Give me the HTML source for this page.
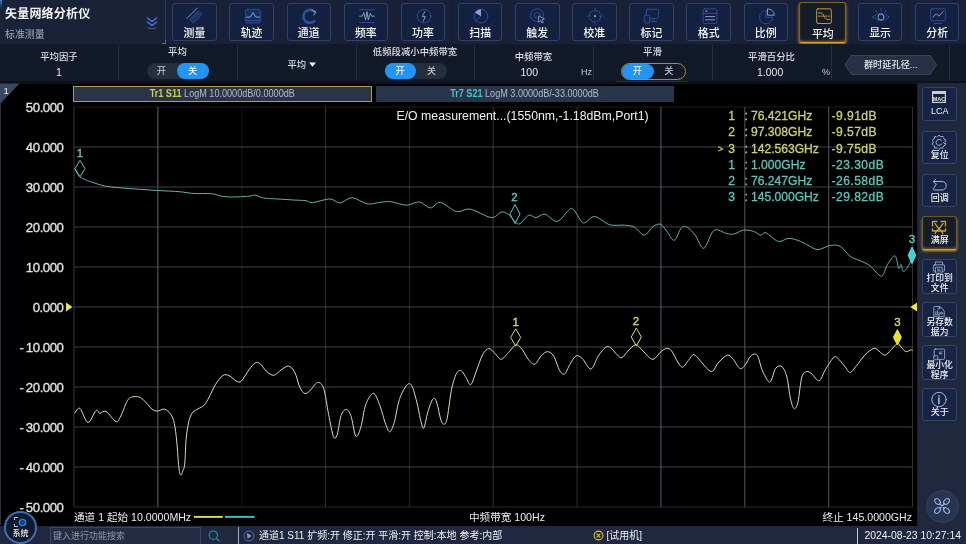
<!DOCTYPE html>
<html lang="zh"><head><meta charset="utf-8"><title>矢量网络分析仪</title>
<style>
*{box-sizing:border-box;margin:0;padding:0}
html,body{width:966px;height:544px;overflow:hidden;background:#000}
body{font-family:"Liberation Sans","Noto Sans CJK SC",sans-serif;color:#e8e8e8;position:relative;font-size:11px}
#app{position:absolute;left:0;top:0;width:966px;height:544px;overflow:hidden;background:#000;will-change:transform}
.abs{position:absolute}
/* top bar */
#top{position:absolute;left:0;top:0;width:966px;height:44px;background:#19213a}
#title{position:absolute;left:0;top:0;width:166px;height:44px;background:#1a2238;border-right:1px solid #2b3652;border-bottom:1px solid #1a2236}
#title .t1{position:absolute;left:5px;top:3.5px;font-size:12px;font-weight:700;color:#f2f2f2;letter-spacing:.2px;white-space:nowrap}
#title .t2{position:absolute;left:5px;top:26.5px;font-size:9.9px;color:#a4abba;white-space:nowrap}
#title .corner{position:absolute;right:-1px;bottom:-1px;width:4px;height:4px;border-right:1.5px solid #2f6fd0;border-bottom:1.5px solid #2f6fd0}
#title .tl{position:absolute;left:0;top:0;width:1.5px;height:8px;background:linear-gradient(#2f7fe8,#1a2238)}
.tb{position:absolute;top:3px;width:44.5px;height:37.5px;border:1px solid #35425f;border-radius:3px;background:#13203f;text-align:center}
.tb svg{position:absolute;left:11.3px;top:2.6px;fill:none;stroke:#2a4f9e;stroke-width:1.05;stroke-linecap:round;stroke-linejoin:round}
.tb span{position:absolute;left:0;right:0;top:21.6px;font-size:10.9px;font-weight:500;color:#f4f4f4;line-height:15px;white-space:nowrap}
.tb.act{top:1.5px;margin-left:-1.3px;width:47px;height:41px;border-color:#7d6426;border-bottom-color:#d9a52a;background:#151b29;box-shadow:0 1.5px 3px -0.5px #d9a321, inset 0 -2px 3px -1px rgba(217,163,33,.55)}
.tb.act svg{stroke:#c9a13a;left:12.3px;top:4.2px}
.tb.act span{top:24px}
.tsep{position:absolute;top:0;width:1px;height:44px;background:#161d34}
/* second row */
#row2{position:absolute;left:0;top:44px;width:966px;height:40px;background:#121929;border-bottom:3px solid #0c111c}
.cell{position:absolute;top:0;height:39px}
.vsep{position:absolute;top:1px;width:1.3px;height:35px;background:#272e40}
.lab{position:absolute;left:0;right:0;text-align:center;font-size:9.4px;color:#dcdfe5;white-space:nowrap;line-height:12px;font-weight:500}
.val{position:absolute;margin-top:-1px;font-size:10.5px;color:#e8e8e8;line-height:12px;white-space:nowrap}
.tog{position:absolute;height:16px;border-radius:8px;background:#262d3e;font-size:9.3px;color:#cfd3da;line-height:16px}
.tog i{position:absolute;top:0;height:16px;font-style:normal;text-align:center;border-radius:8px}
.tog i.on{background:#2294f4;color:#fff}
/* chart */
#chart{position:absolute;left:0;top:83.5px;width:917px;height:441px;background:#000;border-left:1.5px solid #283247}
.yl{position:absolute;left:0;width:63.5px;text-align:right;font-size:13.2px;color:#e4e4e4;line-height:16px;height:16px;letter-spacing:-.45px;padding-right:0;-webkit-text-stroke:.3px #e4e4e4}
.yl b{font-weight:400;letter-spacing:2px}
.tab{position:absolute;top:85.7px;height:16px;font-size:9.1px;line-height:14px;text-align:center;color:#b4bac8;white-space:nowrap}
.tab span{display:inline-block;transform:scaleY(1.16);transform-origin:50% 55%}
.mk{font-size:11.5px;text-anchor:middle;font-family:"Liberation Sans",sans-serif;stroke-width:.35px}
.mr{position:absolute;left:700px;width:215px;height:16px;font-size:12.1px;line-height:16px;white-space:nowrap;-webkit-text-stroke:.3px}
.mr.y{color:#cfd26e}.mr.c{color:#5cc6bf}
.mr span{position:absolute;top:0}
.mr .ma{left:18px;font-size:9px}
.mr .mn{left:20px;width:15px;text-align:right}
.mr .mc{left:44.5px}
.mr .mf{left:51px}
.mr .mv{left:131.5px;letter-spacing:.45px}
.bt{position:absolute;top:510px;font-size:10.6px;line-height:15px;color:#ececec;white-space:nowrap}
/* sidebar */
#side{position:absolute;left:917px;top:83px;width:49px;height:461px;background:#20283e;border-left:1.5px solid #1a2133}
.sb{position:absolute;left:922.3px;width:34.7px;border:1px solid #36435f;border-radius:3px;background:#172446;text-align:center}
.sb svg{position:absolute;left:6px;top:1px;fill:none;stroke:#aab6d6;stroke-width:1;stroke-linecap:round;stroke-linejoin:round}
.sb span{position:absolute;left:-4px;right:-4px;top:18.3px;font-size:9px;line-height:11px;color:#f0f0f0;font-weight:500;white-space:nowrap}
.sb.two svg{top:0.5px;transform:scale(.8);transform-origin:50% 0}
.sb.two span{top:13.5px;line-height:10px;font-size:8.8px}
.sb.act{border-color:#6d5928;border-bottom-color:#cfa02c;background:#171c2a;box-shadow:0 1.5px 2.5px -0.5px #d9a321, inset 0 -2px 3px -1px rgba(217,163,33,.5)}
.sb.act svg{stroke:#c9a035;stroke-width:1.3}
/* status */
#status{position:absolute;left:0;top:525.5px;width:966px;height:20px;background:#202741}
#sys{position:absolute;left:4px;top:511px;width:33px;height:32.5px;border-radius:50%;background:#121a2e;border:2px solid #3a6fb4;text-align:center}
#sys span{position:absolute;left:0;right:0;top:15.5px;font-size:8px;line-height:10px;color:#f0f0f0;font-weight:500}
#search{position:absolute;left:49.5px;top:527px;width:151px;height:18px;border:1px solid #3a4868;background:#232c44;font-size:9px;line-height:16px;color:#8e97aa;padding-left:2.5px;white-space:nowrap}
.st{position:absolute;top:528px;font-size:10px;line-height:15px;color:#f0f0f0;white-space:nowrap}
</style></head><body><div id="app">

<div id="top">
  <div id="title"><div class="tl"></div><div class="t1">矢量网络分析仪</div><div class="t2">标准测量</div>
    <svg class="abs" style="left:145px;top:16px" width="14" height="14" viewBox="0 0 14 14" fill="none" stroke="#3b7be0" stroke-width="1.4" stroke-linecap="round" stroke-linejoin="round"><path d="M2.5 2 L7 5.5 L11.5 2"/><path d="M2.5 6 L7 9.5 L11.5 6"/><path d="M3.5 12 Q7 13.5 10.5 12" stroke="#59616f" stroke-width="1"/></svg>
    <div class="corner"></div>
  </div>
  <div class="tb" style="left:172.2px"><svg viewBox="0 0 24 20" width="22" height="18.3"><g transform="translate(12 10) scale(.9) translate(-12 -10) rotate(-45 12 10)"><rect x="4.5" y="8.5" width="15" height="6" rx="1" fill="rgba(44,88,176,.3)"/><line x1="3" y1="5" x2="21" y2="5" stroke="#8a9ecb"/><line x1="8" y1="8.5" x2="8" y2="11"/><line x1="12" y1="8.5" x2="12" y2="11"/><line x1="16" y1="8.5" x2="16" y2="11"/></g></svg><span>测量</span></div><div class="tb" style="left:229.3px"><svg viewBox="0 0 24 20" width="22" height="18.3"><rect x="4" y="2.5" width="16" height="15" rx="1.5" fill="rgba(44,88,176,.25)"/><path d="M5 11 H9 L12 6 L15 11 H19" stroke="#8a9ecb"/><line x1="5" y1="15" x2="19" y2="15"/></svg><span>轨迹</span></div><div class="tsep" style="left:222.8px"></div><div class="tb" style="left:286.5px"><svg viewBox="0 0 24 20" width="22" height="18.3"><path d="M16.5 15.5 A7 7 0 1 1 17.5 6" stroke-width="3" stroke-dasharray="2.2 0.8"/><path d="M14 3.5 L18.5 5.5 L16 9" stroke="#8a9ecb" fill="none"/></svg><span>通道</span></div><div class="tsep" style="left:280.0px"></div><div class="tb" style="left:343.6px"><svg viewBox="0 0 24 20" width="22" height="18.3"><line x1="4" y1="3" x2="20" y2="3"/><line x1="4" y1="17" x2="20" y2="17"/><path d="M4 10 H7 L8.5 6 L10.5 14 L12 5 L13.5 14 L15.5 7 L17 10 H20" stroke="#8a9ecb"/></svg><span>频率</span></div><div class="tsep" style="left:337.1px"></div><div class="tb" style="left:400.7px"><svg viewBox="0 0 24 20" width="22" height="18.3"><circle cx="12" cy="10" r="7.5"/><path d="M13 5 L10 10.5 H13.5 L11 15.5" stroke="#8a9ecb"/></svg><span>功率</span></div><div class="tsep" style="left:394.2px"></div><div class="tb" style="left:457.9px"><svg viewBox="0 0 24 20" width="22" height="18.3"><circle cx="12" cy="10" r="7.5"/><path d="M12 10 L5.5 6.3 A7.5 7.5 0 0 1 12 2.5 Z" fill="#8a9ecb" stroke="none"/><path d="M12 10 L6 15" /></svg><span>扫描</span></div><div class="tsep" style="left:451.4px"></div><div class="tb" style="left:515.0px"><svg viewBox="0 0 24 20" width="22" height="18.3"><circle cx="11" cy="9" r="7"/><circle cx="11" cy="9" r="3.2"/><path d="M13 10 L19 13 L16.3 14 L17.8 17 L16.5 17.6 L15 14.8 L13 16.5 Z" fill="#1a2440" stroke="#8a9ecb" stroke-width="0.9"/></svg><span>触发</span></div><div class="tsep" style="left:508.5px"></div><div class="tb" style="left:572.1px"><svg viewBox="0 0 24 20" width="22" height="18.3"><circle cx="12" cy="10" r="6.5" stroke-dasharray="7.2 3"/><line x1="12" y1="1" x2="12" y2="5"/><line x1="12" y1="15" x2="12" y2="19"/><line x1="3" y1="10" x2="7" y2="10"/><line x1="17" y1="10" x2="21" y2="10"/><circle cx="12" cy="10" r="1.2" fill="#8a9ecb" stroke="none"/></svg><span>校准</span></div><div class="tsep" style="left:565.6px"></div><div class="tb" style="left:629.2px"><svg viewBox="0 0 24 20" width="22" height="18.3"><rect x="6" y="2.5" width="13" height="10" rx="1"/><rect x="3.5" y="9" width="6" height="8.5" rx="1" fill="#1a2440"/><line x1="11" y1="16" x2="17" y2="16"/><line x1="14" y1="12.5" x2="14" y2="16"/></svg><span>标记</span></div><div class="tsep" style="left:622.7px"></div><div class="tb" style="left:686.4px"><svg viewBox="0 0 24 20" width="22" height="18.3"><rect x="4.5" y="2" width="15" height="16" rx="1.5"/><line x1="4.5" y1="7" x2="19.5" y2="7"/><line x1="7" y1="4.5" x2="9" y2="4.5" stroke="#8a9ecb"/><line x1="7" y1="10.5" x2="17" y2="10.5" stroke="#8a9ecb"/><line x1="7" y1="14" x2="17" y2="14" stroke="#8a9ecb"/></svg><span>格式</span></div><div class="tsep" style="left:679.9px"></div><div class="tb" style="left:743.5px"><svg viewBox="0 0 24 20" width="22" height="18.3"><path d="M11 4 A7.2 7.2 0 1 0 18.2 11.2 H11 Z"/><path d="M13 2 A7 7 0 0 1 20 9 H13 Z" stroke="#8a9ecb"/></svg><span>比例</span></div><div class="tsep" style="left:737.0px"></div><div class="tb act" style="left:800.6px"><svg viewBox="0 0 24 20" width="22" height="18.3"><rect x="4" y="2" width="16" height="16" rx="1.5"/><path d="M6 6.5 H9 C12 6.5 12 13.5 15 13.5 H18" /><line x1="6" y1="10" x2="18" y2="10" stroke-dasharray="2 1.5"/></svg><span>平均</span></div><div class="tsep" style="left:794.1px"></div><div class="tb" style="left:857.8px"><svg viewBox="0 0 24 20" width="22" height="18.3"><path d="M3 11 Q12 2.5 21 11 Q12 19 3 11 Z"/><circle cx="12" cy="11" r="3.3" stroke="#8a9ecb"/><line x1="6" y1="3.5" x2="7.5" y2="5.5"/><line x1="12" y1="1.5" x2="12" y2="4"/><line x1="18" y1="3.5" x2="16.5" y2="5.5"/></svg><span>显示</span></div><div class="tsep" style="left:851.3px"></div><div class="tb" style="left:914.9px"><svg viewBox="0 0 24 20" width="22" height="18.3"><rect x="4" y="2" width="16" height="13" rx="1.5"/><path d="M6.5 11 L10 7.5 L13 10 L17.5 5" stroke="#8a9ecb"/><line x1="8" y1="18" x2="16" y2="18"/></svg><span>分析</span></div><div class="tsep" style="left:908.4px"></div>
</div>

<div id="row2">
  <div class="vsep" style="left:117.5px"></div><div class="vsep" style="left:236.5px"></div><div class="vsep" style="left:355.5px"></div><div class="vsep" style="left:474px"></div><div class="vsep" style="left:593px"></div><div class="vsep" style="left:712px"></div><div class="vsep" style="left:830.5px"></div><div class="vsep" style="left:949px"></div>
  <div class="cell" style="left:0;width:118px"><div class="lab" style="top:7px">平均因子</div><div class="val" style="left:56px;top:22.5px">1</div></div>
  <div class="cell" style="left:118px;width:119px"><div class="lab" style="top:1.5px">平均</div>
     <div class="tog" style="left:28.5px;top:19px;width:62px"><i style="left:0;width:30px">开</i><i class="on" style="left:30.5px;width:31.5px">关</i></div></div>
  <div class="cell" style="left:237px;width:119px"><div class="lab" style="top:14.5px;left:10px;font-size:9.3px">平均 <svg width="7" height="5" viewBox="0 0 7 5" style="vertical-align:1px"><path d="M0 0.5 H7 L3.5 4.8 Z" fill="#f0f0f0"/></svg></div></div>
  <div class="cell" style="left:356px;width:118px"><div class="lab" style="top:1.5px">低频段减小中频带宽</div>
     <div class="tog" style="left:28.5px;top:19px;width:62px"><i class="on" style="left:0;width:31.5px">开</i><i style="left:32px;width:30px">关</i></div></div>
  <div class="cell" style="left:474px;width:119px"><div class="lab" style="top:7px">中频带宽</div><div class="val" style="left:46.5px;top:22.5px">100</div><div class="val" style="left:107px;top:23px;font-size:9px;color:#c9ccd4">Hz</div></div>
  <div class="cell" style="left:593px;width:119px"><div class="lab" style="top:1.5px">平滑</div>
     <div class="tog" style="left:27.5px;top:19px;width:65px;height:17px;border:1px solid #b48a30;border-radius:9px;background:#131927"><i class="on" style="left:0;top:0;width:32px;height:15px;line-height:15px">开</i><i style="left:32px;width:31px;height:15px;line-height:15px">关</i></div></div>
  <div class="abs" style="left:616px;top:37px;width:72px;height:1px;background:#3b2c1a"></div>
  <div class="cell" style="left:712px;width:119px"><div class="lab" style="top:7px">平滑百分比</div><div class="val" style="left:45px;top:22.5px">1.000</div><div class="val" style="left:110px;top:23px;font-size:9px;color:#c9ccd4">%</div></div>
  <div class="abs" style="left:844.5px;top:10.5px;width:92.5px;height:20.5px;background:#3a435a;clip-path:polygon(7px 0,calc(100% - 7px) 0,100% 50%,calc(100% - 7px) 100%,7px 100%,0 50%)"><div class="abs" style="left:1px;top:1px;right:1px;bottom:1px;background:#293046;clip-path:polygon(6.6px 0,calc(100% - 6.6px) 0,100% 50%,calc(100% - 6.6px) 100%,6.6px 100%,0 50%);text-align:center;font-size:9.2px;line-height:18px;color:#e6e8ec;font-weight:500;white-space:nowrap">群时延孔径...</div></div>
</div>

<div id="chart"></div>
<svg class="abs" style="left:0;top:0" width="966" height="544" viewBox="0 0 966 544">
  <polygon points="0,83.5 19.5,83.5 1,103 0,103" fill="#3a4560"/>
  <text x="3.5" y="94" font-size="9.5" fill="#f0f0f0" font-family="Liberation Sans, sans-serif">1</text>
  <g stroke="#5c5c64" stroke-width="1.1"><line x1="74.00" y1="107" x2="74.00" y2="507" stroke-opacity="0.55"/><line x1="157.85" y1="107" x2="157.85" y2="507" stroke-opacity="0.95"/><line x1="241.70" y1="107" x2="241.70" y2="507" stroke-opacity="0.20"/><line x1="325.55" y1="107" x2="325.55" y2="507" stroke-opacity="0.50"/><line x1="409.40" y1="107" x2="409.40" y2="507" stroke-opacity="0.38"/><line x1="493.25" y1="107" x2="493.25" y2="507" stroke-opacity="0.50"/><line x1="577.10" y1="107" x2="577.10" y2="507" stroke-opacity="0.50"/><line x1="660.95" y1="107" x2="660.95" y2="507" stroke-opacity="0.95"/><line x1="744.80" y1="107" x2="744.80" y2="507" stroke-opacity="0.85"/><line x1="828.65" y1="107" x2="828.65" y2="507" stroke-opacity="0.85"/><line x1="912.50" y1="107" x2="912.50" y2="507" stroke-opacity="0.50"/><line x1="74.0" y1="107" x2="912.5" y2="107" stroke-opacity="0.28"/><line x1="74.0" y1="147" x2="912.5" y2="147" stroke-opacity="0.70"/><line x1="74.0" y1="187" x2="912.5" y2="187" stroke-opacity="0.70"/><line x1="74.0" y1="227" x2="912.5" y2="227" stroke-opacity="0.70"/><line x1="74.0" y1="267" x2="912.5" y2="267" stroke-opacity="0.70"/><line x1="74.0" y1="307" x2="912.5" y2="307" stroke-opacity="0.70"/><line x1="74.0" y1="347" x2="912.5" y2="347" stroke-opacity="0.70"/><line x1="74.0" y1="387" x2="912.5" y2="387" stroke-opacity="0.70"/><line x1="74.0" y1="427" x2="912.5" y2="427" stroke-opacity="0.70"/><line x1="74.0" y1="467" x2="912.5" y2="467" stroke-opacity="0.70"/><line x1="74.0" y1="507" x2="912.5" y2="507" stroke-opacity="0.45"/></g>
  <path d="M74.5 168.6C74.9 169.3 76.1 171.7 77.0 173.0C77.9 174.3 78.6 175.7 80.0 176.8C81.4 177.9 84.0 179.1 86.0 180.0C88.0 180.9 89.4 181.3 92.4 182.3C95.4 183.3 100.4 185.1 104.8 186.0C109.2 186.9 114.1 187.3 119.7 187.8C125.3 188.3 133.6 188.9 139.6 189.3C145.6 189.7 151.1 190.1 157.5 190.5C163.9 190.9 173.4 191.2 179.3 191.7C185.2 192.2 189.0 193.2 194.2 193.5C199.4 193.8 207.2 193.3 211.6 193.7C216.0 194.1 218.4 195.7 221.6 196.2C224.8 196.7 227.1 197.0 231.5 197.0C235.9 197.0 245.1 196.5 248.9 196.2C252.7 195.9 252.7 194.9 255.1 195.2C257.5 195.5 260.4 197.4 263.8 198.0C267.2 198.6 271.4 198.6 276.2 198.9C281.0 199.2 288.8 199.7 293.6 200.0C298.4 200.3 303.0 200.3 306.0 200.7C309.0 201.1 308.6 203.0 312.4 202.7C316.2 202.4 325.4 198.9 329.8 198.9C334.2 198.9 336.2 203.1 339.8 202.9C343.4 202.7 347.8 197.5 352.2 197.7C356.6 197.9 362.7 203.1 367.1 203.9C371.5 204.7 375.7 202.8 379.5 202.4C383.3 202.0 386.3 201.3 390.7 201.7C395.1 202.1 402.2 205.2 406.8 205.2C411.4 205.2 415.5 201.5 419.3 201.9C423.1 202.3 427.0 207.8 430.4 207.9C433.8 208.0 436.2 201.8 440.4 202.4C444.6 203.0 451.7 210.5 456.5 211.6C461.3 212.7 464.6 208.1 470.2 209.1C475.8 210.1 486.3 217.1 491.3 217.6C496.3 218.1 498.4 212.6 501.2 212.1C504.0 211.6 505.9 212.7 508.7 214.6C511.5 216.5 515.4 223.9 518.6 224.0C521.8 224.1 525.8 216.3 528.6 215.3C531.4 214.3 533.4 217.8 536.0 217.6C538.6 217.4 541.5 213.6 544.9 214.2C548.3 214.8 553.3 222.2 557.3 221.4C561.3 220.6 567.0 210.7 569.8 209.0C572.6 207.3 572.5 208.8 574.7 211.0C576.9 213.2 580.2 222.0 583.4 222.9C586.6 223.8 590.4 216.2 594.6 216.5C598.8 216.8 604.7 223.3 609.5 224.7C614.3 226.1 620.4 224.8 624.4 225.2C628.4 225.6 631.1 225.5 634.3 227.1C637.5 228.7 641.3 235.2 644.3 235.1C647.3 235.0 650.4 228.3 653.0 226.6C655.6 224.9 658.2 223.5 660.4 224.2C662.6 224.9 664.4 228.3 666.6 230.9C668.8 233.5 671.7 240.8 674.1 240.3C676.5 239.8 679.4 229.6 681.6 227.6C683.8 225.6 685.6 226.4 687.8 227.6C690.0 228.8 692.6 231.8 695.2 235.1C697.8 238.4 700.9 249.1 703.9 248.3C706.9 247.5 710.3 232.8 713.9 230.4C717.5 228.0 723.1 232.8 726.3 233.4C729.5 234.0 730.9 234.6 733.7 234.1C736.5 233.6 740.5 230.5 743.7 230.1C746.9 229.7 750.9 230.6 753.6 231.4C756.3 232.2 758.8 235.0 760.8 235.2C762.8 235.4 763.0 231.7 765.8 232.7C768.6 233.7 774.6 240.5 778.2 241.4C781.8 242.3 784.9 238.6 788.1 238.4C791.3 238.2 794.8 239.3 798.0 240.4C801.2 241.5 804.8 243.7 808.0 245.2C811.2 246.7 814.3 249.6 817.9 249.6C821.5 249.6 826.7 245.9 830.3 245.4C833.9 244.9 837.1 244.7 840.3 246.4C843.5 248.1 847.0 254.0 850.2 256.3C853.4 258.6 857.0 259.3 860.2 260.8C863.4 262.3 866.7 263.3 870.1 265.8C873.5 268.3 878.5 276.4 881.3 276.2C884.1 276.0 885.3 267.8 887.5 264.5C889.7 261.2 893.2 255.2 895.0 255.8C896.8 256.4 897.7 266.9 898.7 268.3C899.7 269.7 900.3 264.0 901.1 264.5C901.9 265.0 902.2 271.7 903.6 271.5C905.0 271.3 908.4 266.2 909.8 263.3C911.2 260.4 911.9 255.0 912.3 253.4" fill="none" stroke="#68b0ab" stroke-width="1" stroke-linejoin="round"/>
  <path d="M74.5 413.4C75.4 412.6 77.9 406.9 80.0 408.4C82.1 409.9 85.3 422.2 87.9 422.5C90.5 422.8 94.2 411.9 96.1 410.4C98.0 408.9 98.2 413.2 99.8 413.4C101.4 413.6 103.4 410.1 106.0 411.4C108.6 412.7 113.6 420.9 116.0 421.6C118.4 422.3 118.9 419.4 120.9 415.8C122.9 412.2 125.8 402.3 128.4 399.2C131.0 396.1 134.7 396.6 137.1 396.7C139.5 396.8 140.9 397.7 143.3 399.7C145.7 401.7 149.7 407.3 152.0 409.1C154.3 410.9 155.5 411.1 157.5 411.1C159.5 411.1 162.3 408.6 164.4 409.1C166.5 409.6 169.0 411.8 170.6 414.1C172.2 416.4 173.3 418.9 174.3 423.3C175.3 427.7 176.1 434.9 176.8 441.9C177.5 448.9 178.2 461.5 178.8 466.8C179.4 472.1 179.9 474.4 180.6 475.0C181.3 475.6 182.3 472.4 183.0 470.5C183.7 468.6 184.3 468.4 184.8 463.0C185.3 457.6 185.6 443.9 186.3 437.0C187.0 430.1 188.2 423.6 189.3 419.6C190.4 415.6 191.6 413.8 193.0 412.1C194.4 410.4 196.2 410.0 198.0 408.9C199.8 407.8 202.4 407.1 204.2 405.2C206.0 403.3 207.3 400.5 209.1 397.2C210.9 393.9 213.1 388.3 215.3 384.8C217.5 381.3 220.6 377.1 222.8 375.6C225.0 374.1 226.8 374.7 229.0 375.6C231.2 376.5 234.5 380.2 236.5 381.1C238.5 382.0 239.4 382.9 241.4 381.1C243.4 379.3 246.7 372.8 248.9 369.9C251.1 367.0 253.3 363.9 255.1 362.9C256.9 361.9 258.3 362.4 260.1 363.7C261.9 365.0 264.1 369.2 266.3 371.1C268.5 373.0 271.3 375.5 273.7 375.3C276.1 375.1 278.8 371.4 281.2 369.9C283.6 368.4 286.4 365.7 288.6 366.1C290.8 366.5 293.0 369.0 294.8 372.4C296.6 375.8 298.2 383.9 299.8 387.3C301.4 390.7 303.2 392.9 304.8 393.5C306.4 394.1 307.9 392.5 309.9 390.8C311.9 389.1 315.2 383.0 317.4 382.6C319.6 382.2 321.8 383.2 323.6 388.3C325.4 393.4 327.0 406.6 328.6 414.4C330.2 422.2 332.1 433.6 333.5 436.8C334.9 440.0 336.1 437.7 337.3 434.3C338.5 430.9 339.6 419.7 341.0 415.7C342.4 411.7 344.4 409.4 346.0 409.4C347.6 409.4 349.3 411.4 350.9 415.7C352.5 420.0 354.3 434.5 355.9 436.3C357.5 438.1 359.3 431.9 360.9 426.8C362.5 421.7 363.8 409.9 365.8 404.5C367.8 399.1 371.1 393.3 373.3 393.3C375.5 393.3 377.5 399.5 379.5 404.5C381.5 409.5 384.0 419.9 385.7 424.3C387.4 428.7 388.5 432.2 389.9 431.8C391.3 431.4 392.9 427.1 394.4 421.9C395.9 416.7 397.4 405.4 399.4 399.5C401.4 393.6 404.8 387.3 406.8 385.1C408.8 382.9 410.2 383.1 411.8 385.8C413.4 388.5 415.4 396.6 416.8 402.0C418.2 407.4 419.4 415.2 420.5 419.4C421.6 423.6 422.5 429.3 423.7 428.1C424.9 426.9 426.4 416.6 427.9 411.9C429.4 407.2 431.5 400.6 432.9 399.0C434.3 397.4 435.2 398.3 436.6 402.0C438.0 405.7 440.0 418.9 441.6 421.9C443.2 424.9 445.0 425.8 446.6 420.6C448.2 415.4 449.9 397.2 451.5 389.6C453.1 382.0 454.9 376.4 456.5 373.4C458.1 370.4 459.9 370.1 461.5 370.9C463.1 371.7 465.0 376.2 466.5 378.4C468.0 380.6 469.3 385.8 470.9 384.6C472.5 383.4 474.5 375.7 476.4 370.9C478.3 366.1 480.6 358.4 482.6 354.8C484.6 351.2 486.8 348.8 488.8 348.6C490.8 348.4 493.0 351.8 495.0 353.5C497.0 355.2 499.0 359.5 501.2 359.3C503.4 359.1 506.3 354.6 508.7 352.3C511.1 350.0 513.9 345.2 516.1 344.8C518.3 344.4 520.4 347.4 522.4 349.8C524.4 352.2 526.6 357.5 528.6 359.8C530.6 362.1 532.8 364.8 534.8 364.2C536.8 363.6 539.2 357.9 541.2 355.9C543.2 353.9 545.4 351.7 547.4 351.7C549.4 351.7 551.6 352.8 553.6 355.9C555.6 359.0 558.0 367.9 559.8 370.8C561.6 373.7 563.2 374.8 564.8 373.8C566.4 372.8 568.0 367.5 569.8 364.6C571.6 361.7 574.0 356.9 576.0 355.9C578.0 354.9 579.8 356.3 582.2 358.4C584.6 360.5 588.3 369.5 590.9 369.1C593.5 368.7 595.9 359.4 598.3 355.9C600.7 352.4 603.8 348.5 605.8 347.2C607.8 345.9 608.9 346.5 610.7 347.7C612.5 348.9 615.2 353.1 617.0 354.7C618.8 356.3 620.1 358.2 621.9 357.6C623.7 357.0 625.9 353.0 628.1 350.9C630.3 348.8 633.4 344.9 635.6 344.7C637.8 344.5 639.6 347.6 641.8 349.7C644.0 351.8 647.3 356.1 649.3 357.6C651.3 359.1 652.4 359.8 654.2 358.9C656.0 358.0 658.4 353.9 660.4 352.2C662.4 350.5 664.8 348.6 666.6 348.4C668.4 348.2 669.8 348.7 671.6 350.9C673.4 353.1 676.0 359.5 677.8 362.1C679.6 364.7 681.0 367.5 682.8 367.1C684.6 366.7 687.2 361.6 689.0 359.6C690.8 357.6 692.0 354.3 694.0 354.7C696.0 355.1 699.2 359.8 701.4 362.1C703.6 364.4 705.8 367.6 707.6 369.1C709.4 370.6 710.8 372.4 712.6 371.3C714.4 370.2 716.4 364.7 718.8 362.1C721.2 359.5 725.3 355.8 727.5 355.2C729.7 354.6 730.5 356.3 732.5 358.4C734.5 360.5 737.8 367.1 739.7 368.3C741.6 369.5 742.8 367.8 744.6 365.8C746.4 363.8 748.8 357.6 750.8 355.9C752.8 354.2 755.3 353.0 757.1 355.2C758.9 357.4 760.4 365.7 762.0 369.6C763.6 373.5 765.6 377.6 767.0 379.5C768.4 381.4 769.3 383.3 770.7 381.5C772.1 379.7 773.9 370.7 775.7 368.3C777.5 365.9 780.1 365.2 781.9 366.6C783.7 368.0 785.5 371.8 786.9 377.0C788.3 382.2 789.4 394.3 790.6 399.4C791.8 404.5 793.1 408.2 794.3 408.6C795.5 409.0 796.8 407.0 798.0 401.9C799.2 396.8 800.4 381.8 801.8 377.0C803.2 372.2 805.1 372.1 806.7 371.6C808.3 371.1 809.7 372.3 811.7 373.8C813.7 375.3 817.0 381.4 819.2 380.7C821.4 380.0 823.0 373.4 825.4 369.6C827.8 365.8 831.9 358.7 834.1 357.1C836.3 355.5 837.2 358.0 839.0 359.6C840.8 361.2 843.5 365.0 845.3 367.1C847.1 369.2 848.4 372.7 850.2 372.5C852.0 372.3 854.0 368.6 856.4 365.8C858.8 363.0 862.3 357.5 865.1 354.7C867.9 351.9 871.6 349.0 873.8 348.4C876.0 347.8 877.0 349.8 878.8 350.9C880.6 352.0 883.0 355.4 885.0 355.2C887.0 355.0 889.2 351.6 891.2 349.7C893.2 347.8 895.8 343.9 897.4 343.5C899.0 343.1 899.8 345.9 901.2 347.2C902.6 348.5 904.5 351.3 906.1 351.7C907.7 352.1 910.1 349.8 911.1 349.7C912.1 349.6 912.3 350.8 912.5 351.0" fill="none" stroke="#dedbbc" stroke-width="1" stroke-linejoin="round"/>
  <polygon points="80.0,160.4 85.0,168.6 80.0,176.8 75.0,168.6" fill="none" stroke="#62c9c1" stroke-width="1"/><text x="80" y="156.5" fill="#62c9c1" stroke="#62c9c1" class="mk">1</text><polygon points="515.0,204.5 520.0,214.0 515.0,223.5 510.0,214.0" fill="none" stroke="#62c9c1" stroke-width="1"/><text x="514.5" y="201" fill="#62c9c1" stroke="#62c9c1" class="mk">2</text><polygon points="912.0,247.0 915.8,255.3 912.0,263.6 908.2,255.3" fill="#3fd0d8" stroke="#4ee0e0" stroke-width="1"/><text x="912" y="243" fill="#62c9c1" stroke="#62c9c1" class="mk">3</text><polygon points="515.7,328.8 520.7,337.4 515.7,346.0 510.7,337.4" fill="none" stroke="#dcdc6e" stroke-width="1"/><text x="515.7" y="325.5" fill="#dcdc6e" stroke="#dcdc6e" class="mk">1</text><polygon points="636.3,328.0 641.3,337.0 636.3,346.0 631.3,337.0" fill="none" stroke="#dcdc6e" stroke-width="1"/><text x="636" y="325" fill="#dcdc6e" stroke="#dcdc6e" class="mk">2</text><polygon points="897.4,329.7 901.4,337.3 897.4,344.9 893.4,337.3" fill="#e8e030" stroke="#f0e840" stroke-width="1"/><text x="897.4" y="325.5" fill="#dcdc6e" stroke="#dcdc6e" class="mk">3</text>
  <polygon points="66,302.5 72.5,307 66,311.5" fill="#f0e63c"/>
  <polygon points="917,302.5 910.4,307 917,311.5" fill="#f0e63c"/>
  <line x1="194" y1="516.9" x2="222.8" y2="516.9" stroke="#d6d65a" stroke-width="2"/>
  <line x1="225" y1="516.9" x2="254.6" y2="516.9" stroke="#3dbcc0" stroke-width="2"/>
</svg>
<div class="yl" style="top:99.6px">50.000</div><div class="yl" style="top:139.6px">40.000</div><div class="yl" style="top:179.6px">30.000</div><div class="yl" style="top:219.6px">20.000</div><div class="yl" style="top:259.6px">10.000</div><div class="yl" style="top:299.6px">0.000</div><div class="yl" style="top:339.6px"><b>-</b>10.000</div><div class="yl" style="top:379.6px"><b>-</b>20.000</div><div class="yl" style="top:419.6px"><b>-</b>30.000</div><div class="yl" style="top:459.6px"><b>-</b>40.000</div><div class="yl" style="top:499.6px"><b>-</b>50.000</div>
<div class="tab" style="left:73px;width:298.5px;background:#293447;border:1px solid #b09a62"><span><b style="color:#c9d246;font-weight:700">Tr1 S11</b> LogM 10.0000dB/0.0000dB</span></div>
<div class="tab" style="left:375.5px;width:298px;background:#28344a;line-height:16px"><span><b style="color:#49c3c6;font-weight:700">Tr7 S21</b> LogM 3.0000dB/-33.0000dB</span></div>
<div class="abs" style="left:396.5px;top:107.5px;font-size:12.3px;line-height:16px;color:#f2f2f2;white-space:nowrap">E/O measurement...(1550nm,-1.18dBm,Port1)</div>
<div class="mr y" style="top:108.2px"><span class="ma"></span><span class="mn">1</span><span class="mc">:</span><span class="mf">76.421GHz</span><span class="mv">-9.91dB</span></div><div class="mr y" style="top:124.4px"><span class="ma"></span><span class="mn">2</span><span class="mc">:</span><span class="mf">97.308GHz</span><span class="mv">-9.57dB</span></div><div class="mr y" style="top:140.5px"><span class="ma">></span><span class="mn">3</span><span class="mc">:</span><span class="mf">142.563GHz</span><span class="mv">-9.75dB</span></div><div class="mr c" style="top:156.7px"><span class="ma"></span><span class="mn">1</span><span class="mc">:</span><span class="mf">1.000GHz</span><span class="mv">-23.30dB</span></div><div class="mr c" style="top:172.8px"><span class="ma"></span><span class="mn">2</span><span class="mc">:</span><span class="mf">76.247GHz</span><span class="mv">-26.58dB</span></div><div class="mr c" style="top:189.0px"><span class="ma"></span><span class="mn">3</span><span class="mc">:</span><span class="mf">145.000GHz</span><span class="mv">-29.82dB</span></div>
<div class="bt" style="left:74px">通道 1 起始 10.0000MHz</div>
<div class="bt" style="left:469px">中频带宽 100Hz</div>
<div class="bt" style="right:54px">终止 145.0000GHz</div>

<div id="side"></div>
<div class="sb" style="top:87.0px;height:34.3px"><svg viewBox="0 0 20 18" width="20" height="18"><rect x="3" y="2" width="14" height="12" fill="#c8cdd8" stroke="none"/><rect x="4.2" y="5" width="11.6" height="7.8" fill="#1a2030" stroke="none"/><text x="10" y="11.5" font-size="5.5" font-weight="700" fill="#e8e8f0" stroke="none" text-anchor="middle" font-family="Liberation Sans, sans-serif">MAC</text></svg><span>LCA</span></div><div class="sb" style="top:130.6px;height:33.4px"><svg viewBox="0 0 20 18" width="20" height="18"><path d="M10 2.2 l1.8 1.6 2.4-.3 .6 2.3 2 1.3 -1 2.2 1 2.2 -2 1.3 -.6 2.3 -2.4-.3 L10 16.4 l-1.8-1.6 -2.4 .3 -.6-2.3 -2-1.3 1-2.2 -1-2.2 2-1.3 .6-2.3 2.4 .3 Z" stroke-dasharray="5 1.5"/><path d="M12.5 7.5 A3 3 0 1 0 12.8 10.8" /><path d="M14.5 9.5 l1.5 1.5" /></svg><span>复位</span></div><div class="sb" style="top:173.7px;height:33.4px"><svg viewBox="0 0 20 18" width="20" height="18"><path d="M4.5 5.5 H13 A4 4 0 0 1 13 14 H5 C4 14 4 12.5 5 11.5 L7.5 8"/><path d="M6.5 3.5 L4.2 5.6 L6.5 7.6"/></svg><span>回调</span></div><div class="sb act" style="top:215.8px;height:34.0px"><svg viewBox="0 0 20 18" width="20" height="18"><path d="M3.5 8 V3.5 H8 M12 3.5 H16.5 V8 M16.5 11 V13 H3.5 V11" /><path d="M6 5.5 Q8 9.5 13 13.5 M14 5.5 Q12 9.5 7 13.5 M7 13.5 l-.8 2.2 M13 13.5 l.8 2.2"/></svg><span>满屏</span></div><div class="sb two" style="top:258.9px;height:35.0px"><svg viewBox="0 0 20 18" width="20" height="18"><path d="M5.5 6 V2.5 H14.5 V6"/><rect x="3" y="6" width="14" height="8" rx="1.5"/><rect x="6" y="9" width="8" height="7.5" fill="#172446"/><line x1="8" y1="11.5" x2="11" y2="11.5"/><line x1="8" y1="13.7" x2="12" y2="13.7"/></svg><span>打印到<br>文件</span></div><div class="sb two" style="top:302.2px;height:35.0px"><svg viewBox="0 0 20 18" width="20" height="18"><path d="M3.5 15.5 V4 Q3.5 3 4.5 3 H11 L14.5 6 L16.5 9 V15.5 Z"/><path d="M6 12.5 V9.5 M8 12.5 V8.5 M10 12.5 V10 M5.2 13.6 H11"/><circle cx="13" cy="11.5" r="1.3"/><path d="M8.5 5.2 h3 m-1.2 -1.2 l1.2 1.2 -1.2 1.2"/></svg><span>另存数<br>据为</span></div><div class="sb two" style="top:345.0px;height:34.8px"><svg viewBox="0 0 20 18" width="20" height="18"><rect x="4" y="2.5" width="13" height="13" rx="1.5"/><rect x="3.5" y="11" width="5" height="5" rx="1" fill="#172446"/><path d="M14 5.5 L11 8.5 M11 6 V8.5 H13.5"/></svg><span>最小化<br>程序</span></div><div class="sb" style="top:387.5px;height:33.8px"><svg viewBox="0 0 20 18" width="20" height="18"><circle cx="10" cy="9.5" r="7.2"/><circle cx="10" cy="5.8" r="0.9" fill="#aab6d6" stroke="none"/><path d="M9.9 8 V13.5" stroke-width="1.6"/></svg><span>关于</span></div>
<div class="abs" style="left:925.5px;top:489.5px;width:33px;height:33px;border-radius:50%;background:#2a3450;border:1px solid #36415c"></div>
<svg class="abs" style="left:931px;top:495px" width="22" height="22" viewBox="0 0 22 22" fill="none" stroke="#8fb8e8" stroke-width="1.1" stroke-linecap="round"><ellipse cx="6.5" cy="6.5" rx="3.4" ry="2.2" transform="rotate(45 6.5 6.5)"/><ellipse cx="15.5" cy="6.5" rx="3.4" ry="2.2" transform="rotate(-45 15.5 6.5)"/><ellipse cx="6.5" cy="15.5" rx="3.4" ry="2.2" transform="rotate(-45 6.5 15.5)"/><ellipse cx="15.5" cy="15.5" rx="3.4" ry="2.2" transform="rotate(45 15.5 15.5)"/><path d="M8.5 8.5 L13.5 13.5 M13.5 8.5 L8.5 13.5"/></svg>

<div id="status"></div>
<div id="sys"><svg class="abs" style="left:7px;top:2.5px" width="15" height="12" viewBox="0 0 15 12" fill="none" stroke="#b8c4de" stroke-width="1"><path d="M1.5 4 V1.5 H5 M1.5 8 V10.5 H5"/><circle cx="9.5" cy="6.5" r="3" stroke="#2f7fe8" stroke-width="1.6"/><circle cx="9.5" cy="6.5" r="1" fill="#2f7fe8" stroke="none"/></svg><span>系统</span></div>
<div id="search">键入进行功能搜索</div>
<svg class="abs" style="left:207px;top:529px" width="14" height="14" viewBox="0 0 14 14" fill="none" stroke="#2b90b8" stroke-width="1.1" stroke-linecap="round"><circle cx="6.2" cy="6.2" r="4.2"/><path d="M9.4 9.4 L12 12"/></svg>
<div class="abs" style="left:238px;top:527px;width:1px;height:17px;background:#a4aabc"></div>
<svg class="abs" style="left:242.5px;top:529.5px" width="12" height="12" viewBox="0 0 12 12" fill="none" stroke="#4f6a9c" stroke-width="1"><circle cx="6" cy="6" r="5"/><path d="M4 3 L8.5 6 L4.5 8.5 Z" fill="#8fa6d0" stroke="none"/></svg>
<div class="st" style="left:259px">通道1 S11 扩频:开 修正:开 平滑:开 控制:本地 参考:内部</div>
<svg class="abs" style="left:592.5px;top:530px" width="11" height="11" viewBox="0 0 11 11" fill="none" stroke="#d6c62a" stroke-width="1.1"><circle cx="5.5" cy="5.5" r="4.4"/><path d="M3.6 3.6 L7.4 7.4 M7.4 3.6 L3.6 7.4"/></svg>
<div class="st" style="left:606.5px">[试用机]</div>
<div class="abs" style="left:857px;top:527.5px;width:1px;height:17px;background:#c8ccd6"></div>
<div class="st" style="left:864.5px;font-size:10.4px">2024-08-23 10:27:14</div>
</div></body></html>
